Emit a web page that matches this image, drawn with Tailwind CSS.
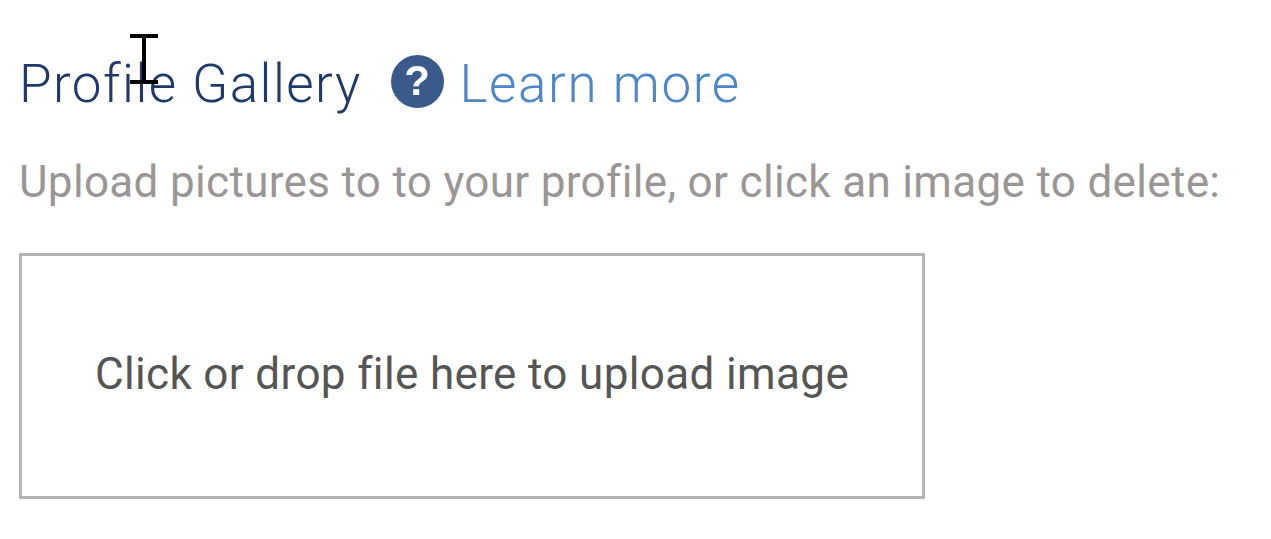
<!DOCTYPE html>
<html lang="en">
<head>
    <meta charset="UTF-8">
    <title>Profile Gallery</title>
    <script src="https://cdn.jsdelivr.net/npm/@tailwindcss/browser@4"></script>
</head>
<body class="bg-white font-['Roboto',sans-serif] min-h-screen overflow-hidden">
    <main class="pl-[19px] pt-[50px]">
        <div class="relative flex items-center h-[64px]">
            <h2 class="mt-[4px] text-[53px] leading-none font-light text-[#1f3a68] tracking-[1.45px]">Profile Gallery</h2>
            <div class="ml-[29px] -mt-[2px] w-[53px] h-[53px] rounded-full bg-[#3b5a8c] flex items-center justify-center blur-[0.6px] shrink-0">
                <span class="text-[42px] leading-none font-bold text-white font-['Liberation_Sans',sans-serif]">?</span>
            </div>
            <a class="mt-[4px] ml-[16px] text-[53px] leading-none font-light text-[#4f86c6] tracking-[1.6px]">Learn more</a>
            <!-- text cursor -->
            <svg class="absolute left-[111px] top-[-16px] w-[28px] h-[50px]" viewBox="0 0 28 50">
                <path d="M0 2h28M14 2v46M0 48h28" stroke="#000" stroke-width="4" fill="none"/>
            </svg>
        </div>
        <p class="mt-[40px] text-[44px] leading-[56px] font-[380] text-[#9a9695] tracking-[0.33px] whitespace-nowrap">Upload pictures to to your profile, or click an image to delete:</p>
        <div class="mt-[43px] w-[906px] h-[246px] pb-[4px] border-[3px] border-[#b5b5b5] flex items-center justify-center">
            <span class="text-[44px] font-[380] text-[#555555] tracking-[0.36px]">Click or drop file here to upload image</span>
        </div>
    </main>
</body>
</html>
